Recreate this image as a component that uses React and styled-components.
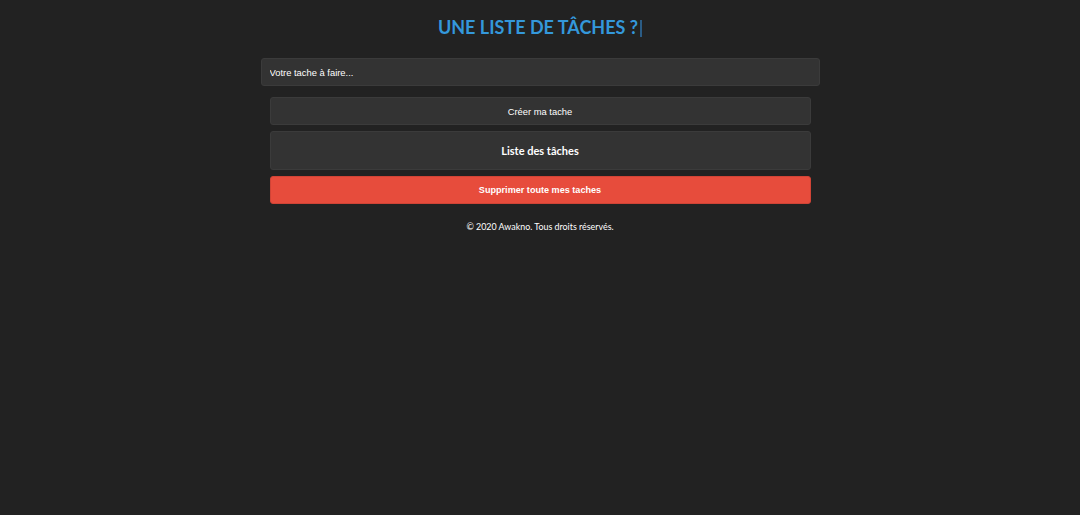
import React from 'react';
import styled, { createGlobalStyle } from 'styled-components';

const GlobalStyle = createGlobalStyle`
  html, body {
    margin: 0;
    padding: 0;
    background: #222222;
    height: 100%;
  }
  body {
    font-family: "Liberation Sans", Arial, sans-serif;
  }
`;

const Page = styled.div`
  min-height: 515px;
  background: #222222;
  display: flex;
  flex-direction: column;
  align-items: center;
  padding-top: 14px;
`;

const Title = styled.h1`
  margin: 0;
  font-family: Lato, "Open Sans", sans-serif;
  font-weight: 700;
  font-size: 18px;
  color: #3498db;
  line-height: 26px;
  display: flex;
  align-items: center;
`;

const Caret = styled.span`
  display: inline-block;
  width: 2px;
  height: 17px;
  margin-left: 2px;
  margin-top: 2px;
  background: #2b5c85;
`;

const Input = styled.input`
  box-sizing: border-box;
  margin-top: 18px;
  width: 559px;
  height: 28px;
  padding: 0 8px;
  background: #333333;
  border: 1px solid #3b3b3b;
  border-radius: 3px;
  color: #ffffff;
  font-family: "Liberation Sans", Arial, sans-serif;
  font-size: 9.4px;
  outline: none;
  &::placeholder {
    color: #ffffff;
  }
`;

const Stack = styled.div`
  width: 541px;
  display: flex;
  flex-direction: column;
  gap: 6px;
  margin-top: 11px;
`;

const Button = styled.button`
  box-sizing: border-box;
  width: 100%;
  height: ${p => p.$tall ? '39px' : '28px'};
  background: ${p => p.$danger ? '#e74c3c' : '#333333'};
  border: 1px solid ${p => p.$danger ? '#d04436' : '#3b3b3b'};
  border-radius: 3px;
  color: #ffffff;
  font-family: ${p => p.$tall ? 'Lato, "Open Sans", sans-serif' : '"Liberation Sans", Arial, sans-serif'};
  font-size: ${p => p.$tall ? '11px' : p.$danger ? '9.1px' : '9.4px'};
  font-weight: ${p => p.$bold ? 700 : 400};
  cursor: pointer;
  padding: 0;
`;

const Footer = styled.p`
  margin: 17px 0 0;
  font-family: Lato, "Open Sans", sans-serif;
  font-size: 8.9px;
  color: #ffffff;
`;

const App = () => {
  return (
    <>
      <GlobalStyle />
      <Page>
        <Title>
          UNE LISTE DE TÂCHES ?<Caret />
        </Title>
        <Input type="text" defaultValue="Votre tache à faire..." />
        <Stack>
          <Button>Créer ma tache</Button>
          <Button $tall $bold>Liste des tâches</Button>
          <Button $danger $bold>Supprimer toute mes taches</Button>
        </Stack>
        <Footer>© 2020 Awakno. Tous droits réservés.</Footer>
      </Page>
    </>
  );
};

export default App;
